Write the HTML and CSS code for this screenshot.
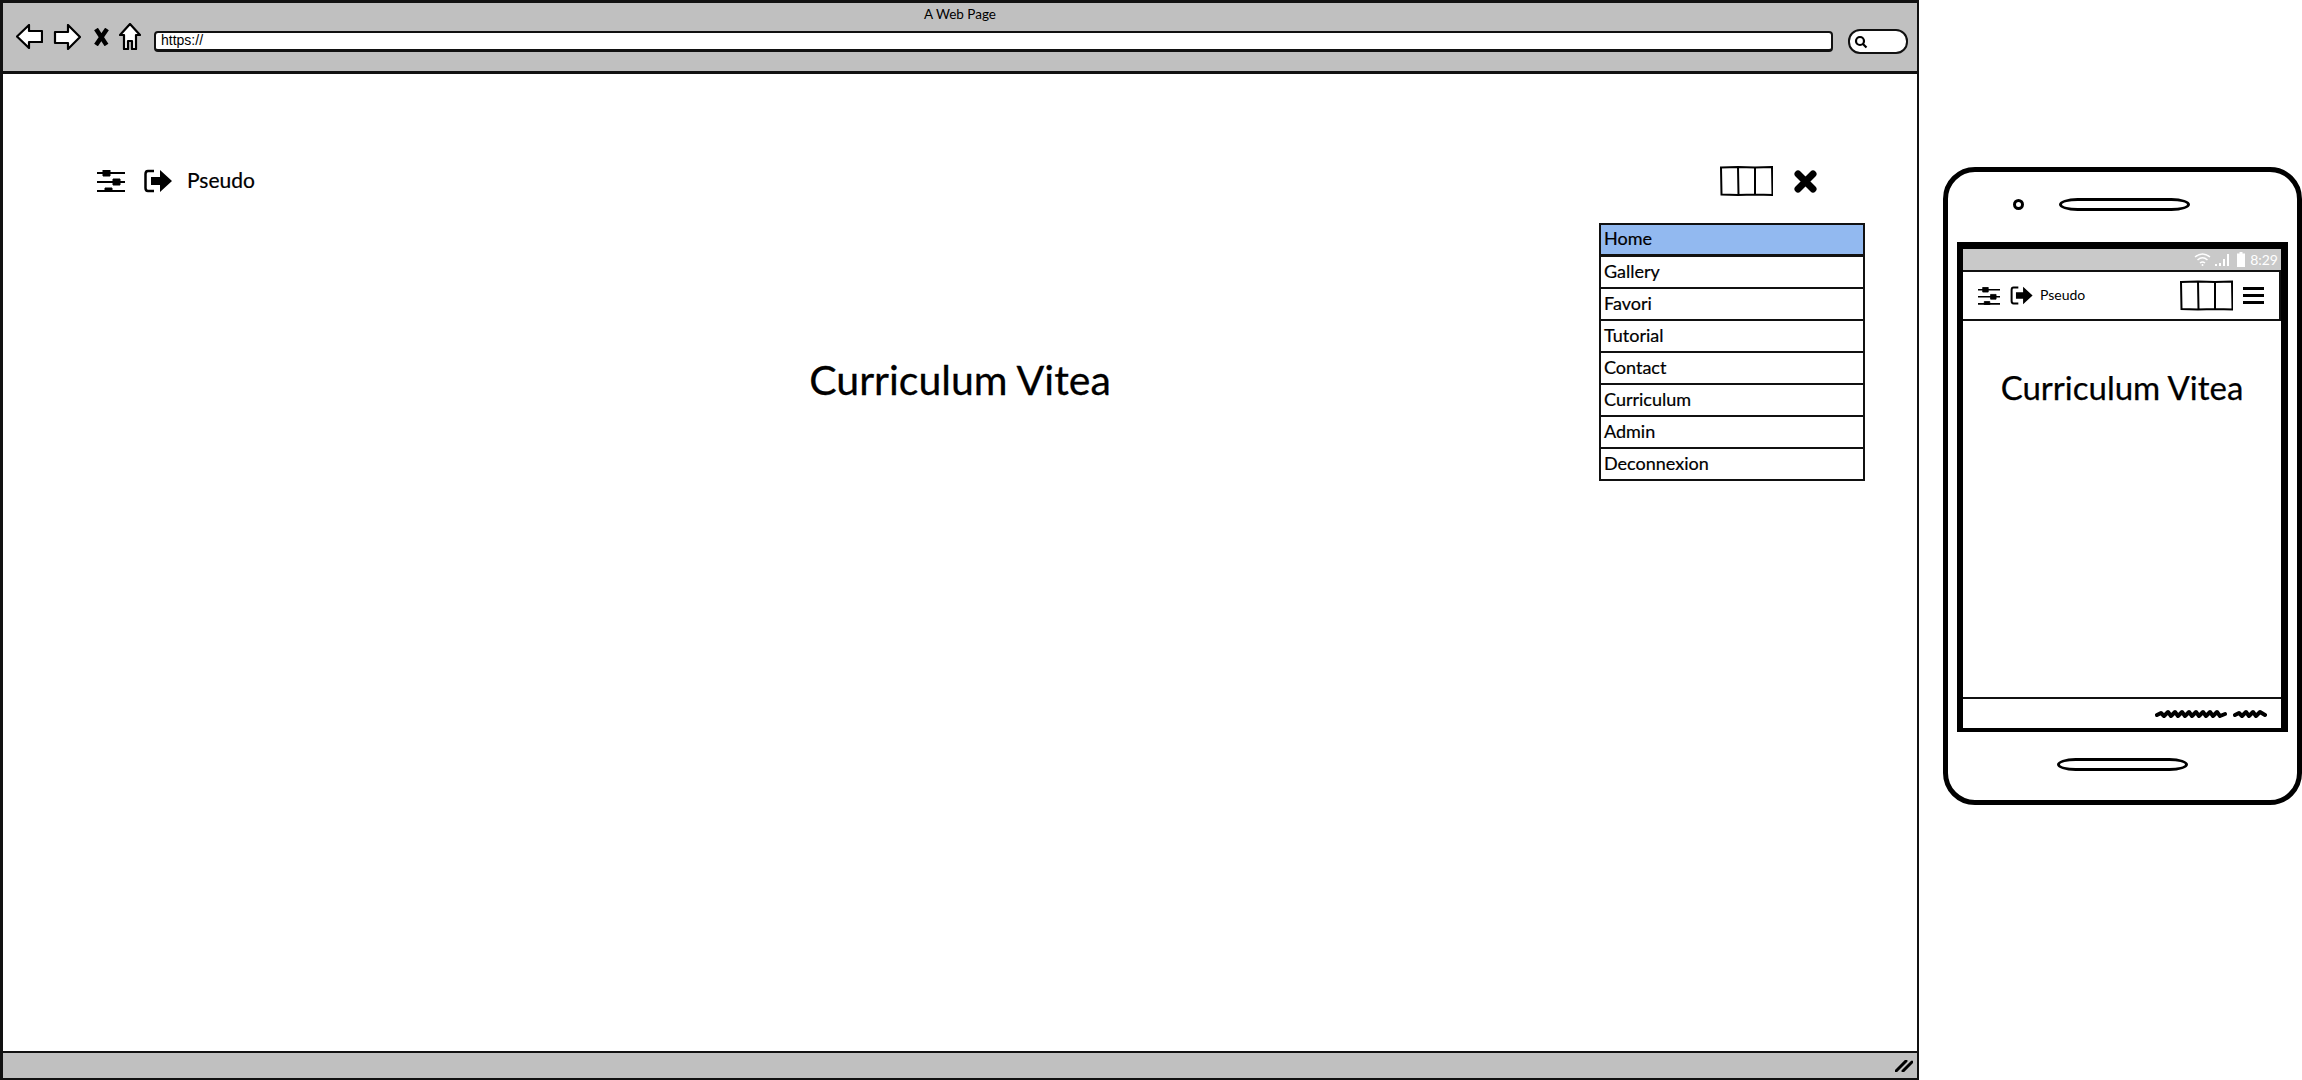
FILE: index.html
```html
<!DOCTYPE html>
<html lang="en">
<head>
    <meta charset="UTF-8">
    <meta name="viewport" content="width=device-width, initial-scale=1.0">
    <title>Curriculum Vitea - Wireframe</title>
    <link rel="stylesheet" href="styles.css">
</head>
<body>
    <svg class="defs" width="0" height="0">
        <symbol id="sliders" viewBox="0 0 28 22">
            <path d="M0 3H28M0 12H28M0 21H28" stroke="#000" stroke-width="2" fill="none"/>
            <path d="M6 0h7v6H6zM16 9h7v6h-7zM8 18h7v4H8z" fill="#000" stroke="#000" stroke-width="1"/>
        </symbol>
        <symbol id="logout" viewBox="0 0 28 24">
            <path d="M10 2H4Q1.500 2 1.500 5V19Q1.500 22 4 22H10" stroke="#000" stroke-width="2.500" fill="none"/>
            <path d="M7 8H16V1L28 12L16 23V16H7Z" fill="#000"/>
        </symbol>
        <symbol id="columns" viewBox="0 0 53 30">
            <path d="M1 1.500L18 1L35 1.500L52 1L52.500 29L35 28.500L18 29L1.500 28.500ZM18 1L18.500 29M35 1L35 28.500" fill="#fff" stroke="#000" stroke-width="2"/>
        </symbol>
    </svg>

    <div class="browser">
        <div class="chrome">
            <div class="page-title">A Web Page</div>
            <div class="nav">
                <svg class="nav-icon" width="27" height="25" viewBox="0 0 27 25"><path d="M13 1L1 12.500L13 24V18H26V7H13Z" fill="#fff" stroke="#000" stroke-width="2.200" stroke-linejoin="round"/></svg>
                <svg class="nav-icon" width="28" height="26" viewBox="0 0 28 26"><path d="M15 1L27 13L15 25V19H2V8H15Z" fill="#fff" stroke="#000" stroke-width="2.200" stroke-linejoin="round"/></svg>
                <svg class="nav-icon" width="15" height="18" viewBox="0 0 15 18"><path d="M2 1L12.500 17M13 1L2 17" stroke="#000" stroke-width="4.500" fill="none"/></svg>
                <svg class="nav-icon" width="22" height="27" viewBox="0 0 22 27"><path d="M11 1L21 12H17V26H13V18H9V26H5V12H1Z" fill="#fff" stroke="#000" stroke-width="2.200" stroke-linejoin="round"/></svg>
                <div class="url-bar">https://</div>
                <div class="search-pill">
                    <svg width="14" height="14" viewBox="0 0 14 14"><circle cx="6" cy="6" r="4" fill="none" stroke="#000" stroke-width="2.200"/><path d="M9 9L12.500 12.500" stroke="#000" stroke-width="2.200"/></svg>
                </div>
            </div>
        </div>

        <div class="content">
            <div class="toolbar">
                <div class="toolbar-left">
                    <svg class="icon-sliders"><use href="#sliders"/></svg>
                    <svg class="icon-logout"><use href="#logout"/></svg>
                    <span class="pseudo">Pseudo</span>
                </div>
                <div class="toolbar-right">
                    <svg class="icon-columns"><use href="#columns"/></svg>
                    <svg class="icon-close" width="23" height="23" viewBox="0 0 23 23"><path d="M4 4L19 19M19 4L4 19" stroke="#000" stroke-width="7" stroke-linecap="round"/></svg>
                </div>
            </div>

            <ul class="menu">
                <li class="menu-item active">Home</li>
                <li class="menu-item">Gallery</li>
                <li class="menu-item">Favori</li>
                <li class="menu-item">Tutorial</li>
                <li class="menu-item">Contact</li>
                <li class="menu-item">Curriculum</li>
                <li class="menu-item">Admin</li>
                <li class="menu-item">Deconnexion</li>
            </ul>

            <h1 class="cv-title">Curriculum Vitea</h1>
        </div>

        <div class="status-bar">
            <svg width="18" height="12" viewBox="0 0 18 12"><path d="M1 11L11 1M8 11L17 2" stroke="#000" stroke-width="3" stroke-linecap="round"/></svg>
        </div>
    </div>

    <div class="phone">
        <div class="phone-top">
            <span class="camera"></span>
            <span class="speaker"></span>
        </div>

        <div class="screen">
            <div class="phone-status">
                <svg width="17" height="13" viewBox="0 0 17 13"><path d="M1 4Q8.500 -2 16 4M3.500 7Q8.500 2.500 13.500 7M6 10Q8.500 8 11 10" fill="none" stroke="#fff" stroke-width="1.500"/><circle cx="8.500" cy="12" r="1" fill="#fff"/></svg>
                <svg width="16" height="14" viewBox="0 0 16 14"><path d="M1 11h2v2H1zM5 10h2v3H5zM9 6h2v7H9zM13 1h2v12h-2z" fill="#fff"/></svg>
                <svg class="battery" width="8" height="15" viewBox="0 0 8 15"><path d="M2.500 0h3v1.500H8V15H0V1.500h2.500z" fill="#fff"/></svg>
                <span class="clock">8:29</span>
            </div>
            <div class="phone-header">
                <svg class="phone-sliders"><use href="#sliders"/></svg>
                <svg class="phone-logout"><use href="#logout"/></svg>
                <span class="phone-pseudo">Pseudo</span>
                <svg class="phone-columns"><use href="#columns"/></svg>
                <div class="burger"><span></span><span></span><span></span></div>
            </div>
            <div class="phone-body">
                <div class="phone-title">Curriculum Vitea</div>
            </div>
            <div class="phone-footer">
                <svg width="112" height="12" viewBox="0 0 112 12"><path d="M2 7L6 5L9 8L13 4L16 8L20 4L23 8L27 4L30 8L34 4L37 8L41 4L44 8L48 4L51 8L55 4L58 8L62 4L65 8L70 6M80 7L84 5L87 8L91 4L94 8L98 4L101 8L105 4L110 7" fill="none" stroke="#000" stroke-width="4" stroke-linecap="round" stroke-linejoin="round"/></svg>
            </div>
        </div>

        <div class="phone-bottom">
            <span class="speaker"></span>
        </div>
    </div>
</body>
</html>
```

FILE: styles.css
```css
* {
    box-sizing: border-box;
}
html, body {
    margin: 0;
    padding: 0;
}
body {
    width: 2302px;
    height: 1080px;
    overflow: hidden;
    display: flex;
    align-items: flex-start;
    background-color: #fff;
    color: #000;
    font-family: Lato, 'Noto Sans', sans-serif;
}
.defs {
    position: absolute;
}

/* browser window */
.browser {
    width: 1919px;
    height: 1080px;
    display: flex;
    flex-direction: column;
    border: 2px solid #111;
    border-left-width: 3px;
    border-top-width: 3px;
}
.chrome {
    height: 71px;
    background-color: #c0c0c0;
    border-bottom: 3px solid #111;
    flex-shrink: 0;
}
.page-title {
    text-align: center;
    font-size: 13.5px;
    line-height: 16px;
    padding-top: 3px;
    height: 19px;
}
.nav {
    display: flex;
    align-items: center;
    height: 32px;
    margin-top: 3px;
    padding-left: 13px;
}
.nav-icon {
    flex-shrink: 0;
    margin-bottom: 9px;
}
.nav-icon:nth-child(2) {
    margin-left: 10px;
}
.nav-icon:nth-child(3) {
    margin-left: 13px;
}
.nav-icon:nth-child(4) {
    margin-left: 10px;
}
.url-bar {
    width: 1679px;
    height: 21px;
    margin-left: 13px;
    padding-left: 5px;
    background-color: #fff;
    border: 2px solid #111;
    border-bottom-width: 3px;
    border-radius: 4px;
    font-family: 'Liberation Sans', Arial, sans-serif;
    font-size: 14px;
    line-height: 15px;
}
.search-pill {
    width: 60px;
    height: 25px;
    margin-left: 15px;
    padding: 4px 0 0 4px;
    background-color: #fff;
    border: 2px solid #111;
    border-radius: 12px;
}
.search-pill svg {
    display: block;
}

.content {
    flex: 1;
    position: relative;
    padding: 90px 94px 0 94px;
    background-color: #fff;
}
.toolbar {
    display: flex;
    justify-content: space-between;
    align-items: center;
    height: 34px;
    margin-right: 6px;
}
.toolbar-left, .toolbar-right {
    display: flex;
    align-items: center;
}
.icon-sliders {
    width: 28px;
    height: 22px;
}
.icon-logout {
    width: 28px;
    height: 24px;
    margin-left: 19px;
}
.pseudo {
    margin-left: 15px;
    font-size: 21px;
    line-height: 24px;
    margin-top: -3px;
    -webkit-text-stroke: 0.2px #000;
}
.icon-columns {
    width: 53px;
    height: 30px;
}
.icon-close {
    margin-left: 21px;
}
.cv-title {
    margin: 0;
    padding-top: 157px;
    text-align: center;
    font-size: 41px;
    line-height: 50px;
    font-weight: 400;
    -webkit-text-stroke: 0.3px #000;
}

/* dropdown over the page */
.menu {
    position: absolute;
    top: 149px;
    right: 52px;
    width: 266px;
    margin: 0;
    padding: 0;
    list-style: none;
    border: 2px solid #111;
    background-color: #fff;
}
.menu-item {
    height: 32px;
    padding-left: 3px;
    font-size: 18px;
    line-height: 28px;
    border-bottom: 2px solid #111;
    -webkit-text-stroke: 0.2px #000;
}
.menu-item:last-child {
    border-bottom: none;
    height: 30px;
}
.menu-item.active {
    background-color: #92b9f0;
    border-bottom-width: 3px;
    line-height: 26px;
}

.status-bar {
    height: 27px;
    flex-shrink: 0;
    display: flex;
    justify-content: flex-end;
    align-items: center;
    padding-right: 4px;
    background-color: #c0c0c0;
    border-top: 2px solid #111;
}

/* phone */
.phone {
    width: 359px;
    height: 638px;
    margin: 167px 0 0 24px;
    border: 5px solid #000;
    border-radius: 32px;
    display: flex;
    flex-direction: column;
    background-color: #fff;
}
.phone-top {
    height: 70px;
    display: flex;
    align-items: center;
    padding: 0 0 6px 65px;
}
.camera {
    width: 11px;
    height: 11px;
    margin-right: 35px;
    border: 3px solid #000;
    border-radius: 50%;
}
.speaker {
    width: 131px;
    height: 13px;
    border: 3px solid #000;
    border-radius: 20px / 7px;
}
.screen {
    height: 490px;
    margin: 0 9px;
    border: 7px solid #000;
    border-bottom-width: 4px;
    border-left-width: 6px;
    display: flex;
    flex-direction: column;
}
.phone-status {
    height: 21px;
    flex-shrink: 0;
    display: flex;
    justify-content: flex-end;
    align-items: center;
    padding-right: 3px;
    background-color: #c9c9c9;
}
.phone-status svg {
    margin-left: 3px;
}
.phone-status .battery {
    margin-left: 7px;
}
.clock {
    margin-left: 5px;
    font-size: 14px;
    color: #fff;
}
.phone-header {
    height: 51px;
    flex-shrink: 0;
    display: flex;
    align-items: center;
    padding: 0 15px;
    border: 2px solid #111;
    border-left: none;
}
.phone-sliders {
    width: 22px;
    height: 18px;
}
.phone-logout {
    width: 23px;
    height: 19px;
    margin-left: 10px;
}
.phone-pseudo {
    margin-left: 7px;
    margin-top: -2px;
    font-size: 14px;
}
.phone-columns {
    width: 53px;
    height: 31px;
    margin-left: auto;
}
.burger {
    width: 21px;
    margin-left: 10px;
    display: flex;
    flex-direction: column;
    gap: 4px;
}
.burger span {
    display: block;
    height: 3px;
    background-color: #000;
}
.phone-body {
    flex: 1;
}
.phone-title {
    padding-top: 46px;
    text-align: center;
    font-size: 33px;
    line-height: 40px;
    -webkit-text-stroke: 0.25px #000;
}
.phone-footer {
    height: 31px;
    flex-shrink: 0;
    display: flex;
    justify-content: flex-end;
    align-items: center;
    padding: 0 14px 0 0;
    border-top: 2px solid #111;
}
.phone-bottom {
    flex: 1;
    display: flex;
    justify-content: center;
    align-items: center;
    padding-bottom: 4px;
}
```
